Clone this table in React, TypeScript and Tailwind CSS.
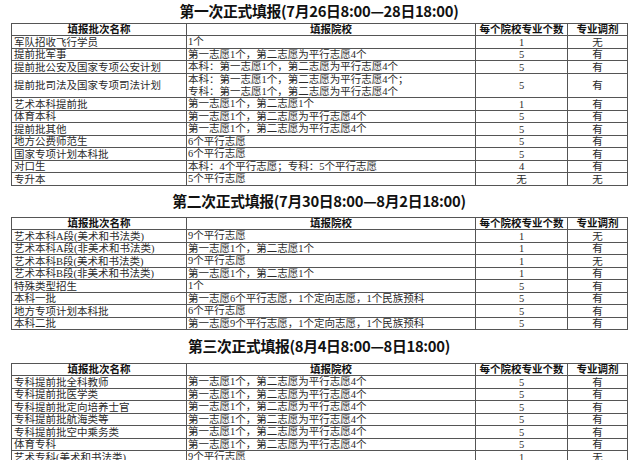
const cjk = "font-['Liberation_Serif','Noto_Sans_CJK_SC',serif]"

type Row = { name: string; plan: string[]; count: string; adjust: string }

const first: Row[] = [
  { name: "军队招收飞行学员", plan: ["1个"], count: "1", adjust: "无" },
  { name: "提前批军事", plan: ["第一志愿1个，第二志愿为平行志愿4个"], count: "5", adjust: "有" },
  { name: "提前批公安及国家专项公安计划", plan: ["本科：第一志愿1个，第二志愿为平行志愿4个"], count: "5", adjust: "有" },
  {
    name: "提前批司法及国家专项司法计划",
    plan: ["本科：第一志愿1个，第二志愿为平行志愿4个；", "专科：第一志愿1个，第二志愿为平行志愿4个"],
    count: "5",
    adjust: "有",
  },
  { name: "艺术本科提前批", plan: ["第一志愿1个，第二志愿1个"], count: "1", adjust: "有" },
  { name: "体育本科", plan: ["第一志愿1个，第二志愿为平行志愿4个"], count: "5", adjust: "有" },
  { name: "提前批其他", plan: ["第一志愿1个，第二志愿为平行志愿4个"], count: "5", adjust: "有" },
  { name: "地方公费师范生", plan: ["6个平行志愿"], count: "5", adjust: "有" },
  { name: "国家专项计划本科批", plan: ["6个平行志愿"], count: "5", adjust: "有" },
  { name: "对口生", plan: ["本科：4个平行志愿；专科：5个平行志愿"], count: "4", adjust: "有" },
  { name: "专升本", plan: ["5个平行志愿"], count: "无", adjust: "无" },
]

const second: Row[] = [
  { name: "艺术本科A段(美术和书法类)", plan: ["9个平行志愿"], count: "1", adjust: "无" },
  { name: "艺术本科A段(非美术和书法类)", plan: ["第一志愿1个，第二志愿1个"], count: "1", adjust: "有" },
  { name: "艺术本科B段(美术和书法类)", plan: ["9个平行志愿"], count: "1", adjust: "无" },
  { name: "艺术本科B段(非美术和书法类)", plan: ["第一志愿1个，第二志愿1个"], count: "1", adjust: "有" },
  { name: "特殊类型招生", plan: ["1个"], count: "5", adjust: "有" },
  { name: "本科一批", plan: ["第一志愿6个平行志愿，1个定向志愿，1个民族预科"], count: "5", adjust: "有" },
  { name: "地方专项计划本科批", plan: ["6个平行志愿"], count: "5", adjust: "有" },
  { name: "本科二批", plan: ["第一志愿9个平行志愿，1个定向志愿，1个民族预科"], count: "5", adjust: "有" },
]

const pingxing = "第一志愿1个，第二志愿为平行志愿4个"

const third: Row[] = [
  { name: "专科提前批全科教师", plan: [pingxing], count: "5", adjust: "有" },
  { name: "专科提前批医学类", plan: [pingxing], count: "5", adjust: "有" },
  { name: "专科提前批定向培养士官", plan: [pingxing], count: "5", adjust: "有" },
  { name: "专科提前批航海类等", plan: [pingxing], count: "5", adjust: "有" },
  { name: "专科提前批空中乘务类", plan: [pingxing], count: "5", adjust: "有" },
  { name: "体育专科", plan: [pingxing], count: "5", adjust: "有" },
  { name: "艺术专科(美术和书法类)", plan: ["9个平行志愿"], count: "1", adjust: "无" },
]

function Title({ text, h }: { text: string; h: string }) {
  return (
    <div className={`${h} flex items-center justify-center`}>
      <span className="font-['Noto_Sans_CJK_SC',sans-serif] text-[14.8px] font-bold leading-none tracking-[-0.3px] text-[#111]">
        {text}
      </span>
    </div>
  )
}

function Sheet({ rows }: { rows: Row[] }) {
  const cell = "border border-[#555] p-0 align-bottom"
  return (
    <table className={`w-[616px] table-fixed border-collapse text-[10.5px] leading-[11px] text-[#2a2a2a] ${cjk}`}>
      <colgroup>
        <col className="w-[175px]" />
        <col className="w-[289px]" />
        <col className="w-[92px]" />
        <col className="w-[60px]" />
      </colgroup>
      <thead>
        <tr className="h-[11.5px] font-bold text-[#111]">
          <th className={`${cell} text-center`}>填报批次名称</th>
          <th className={`${cell} text-center`}>填报院校</th>
          <th className={`${cell} text-center`}>每个院校专业个数</th>
          <th className={`${cell} text-center`}>专业调剂</th>
        </tr>
      </thead>
      <tbody>
        {rows.map((r) => {
          const tall = r.plan.length > 1
          return (
            <tr key={r.name} className={tall ? "h-[24.5px]" : "h-[12px]"}>
              <td className={`${cell} whitespace-nowrap pl-[2px] ${tall ? "!align-middle" : ""}`}>{r.name}</td>
              <td className={`${cell} whitespace-nowrap pl-[1px]`}>
                {r.plan.map((p) => (
                  <div key={p} className="leading-[11.5px]">
                    {p}
                  </div>
                ))}
              </td>
              <td className={`${cell} text-center ${tall ? "!align-middle" : ""}`}>{r.count}</td>
              <td className={`${cell} text-center ${tall ? "!align-middle" : ""}`}>{r.adjust}</td>
            </tr>
          )
        })}
      </tbody>
    </table>
  )
}

export default function App() {
  return (
    <div className="h-[460px] w-[640px] overflow-hidden bg-white pl-[11px]">
      <div className="w-[616px]">
        <Title text="第一次正式填报(7月26日8:00—28日18:00)" h="h-[23px]" />
        <Sheet rows={first} />
        <Title text="第二次正式填报(7月30日8:00—8月2日18:00)" h="h-[31.5px]" />
        <Sheet rows={second} />
        <Title text="第三次正式填报(8月4日8:00—8日18:00)" h="h-[33px]" />
        <Sheet rows={third} />
      </div>
    </div>
  )
}
